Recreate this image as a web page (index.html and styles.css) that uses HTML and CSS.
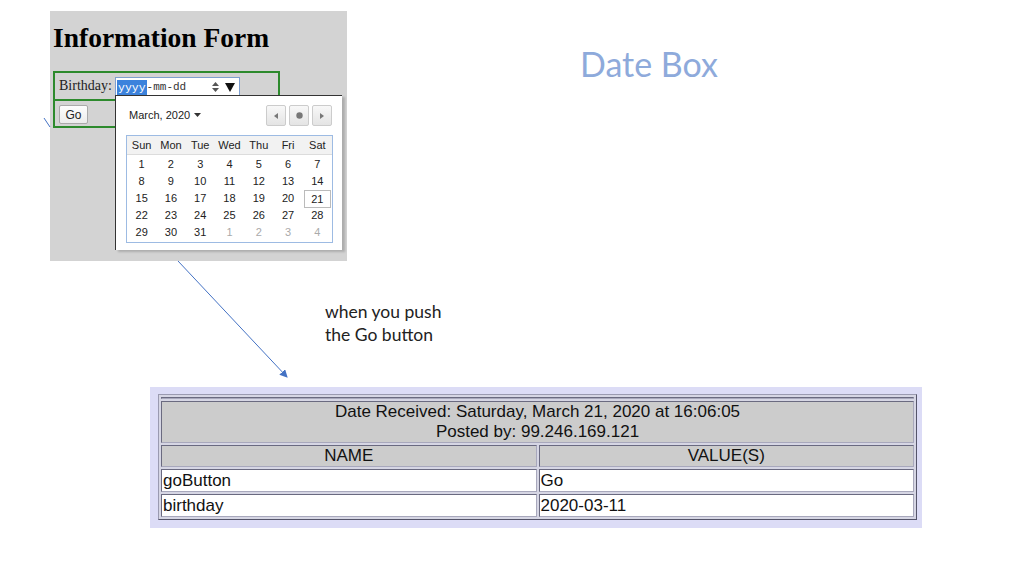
FILE: index.html
```html
<!DOCTYPE html>
<html>
<head>
<meta charset="utf-8">
<link rel="stylesheet" href="styles.css">
</head>
<body>
<div class="slide">
  <div class="shot-form">
    <h1 class="form-title">Information Form</h1>
    <div class="form-box">
      <div class="form-row row-birthday">
        <span class="label">Birthday:</span>
        <div class="date-input">
          <span class="seg-sel">yyyy</span><span class="seg">-mm-dd</span>
          <span class="spin">
            <svg width="9" height="12" viewBox="0 0 9 12"><path d="M4.5 1 L8 5 H1 Z M4.5 11 L8 7 H1 Z" fill="#555"/></svg>
          </span>
          <span class="drop">
            <svg width="10" height="9" viewBox="0 0 10 9"><path d="M0 0 H10 L5 9 Z" fill="#111"/></svg>
          </span>
        </div>
      </div>
      <div class="form-row row-go">
        <button class="go-btn">Go</button>
      </div>
    </div>

    <div class="picker">
      <div class="picker-head">
        <span class="month">March, 2020 <svg width="7" height="4" viewBox="0 0 7 4"><path d="M0 0 H7 L3.5 4 Z" fill="#333"/></svg></span>
        <div class="navs">
          <span class="nav"><svg width="4" height="6" viewBox="0 0 4 6"><path d="M4 0 V6 L0 3 Z" fill="#777"/></svg></span>
          <span class="nav"><svg width="7" height="7" viewBox="0 0 7 7"><circle cx="3.5" cy="3.5" r="3.2" fill="#777"/></svg></span>
          <span class="nav"><svg width="4" height="6" viewBox="0 0 4 6"><path d="M0 0 V6 L4 3 Z" fill="#777"/></svg></span>
        </div>
      </div>
      <div class="cal">
        <div class="cal-head">
          <span>Sun</span><span>Mon</span><span>Tue</span><span>Wed</span><span>Thu</span><span>Fri</span><span>Sat</span>
        </div>
        <div class="cal-body">
          <span>1</span><span>2</span><span>3</span><span>4</span><span>5</span><span>6</span><span>7</span>
          <span>8</span><span>9</span><span>10</span><span>11</span><span>12</span><span>13</span><span>14</span>
          <span>15</span><span>16</span><span>17</span><span>18</span><span>19</span><span>20</span><span class="today">21</span>
          <span>22</span><span>23</span><span>24</span><span>25</span><span>26</span><span>27</span><span>28</span>
          <span>29</span><span>30</span><span>31</span><span class="other">1</span><span class="other">2</span><span class="other">3</span><span class="other">4</span>
        </div>
      </div>
    </div>
  </div>

  <div class="title">Date Box</div>

  <div class="note">when you push<br>the Go button</div>

  <svg class="arrows" width="1024" height="576" viewBox="0 0 1024 576">
    <defs>
      <marker id="ah" markerWidth="8" markerHeight="8" refX="7" refY="4" orient="auto" markerUnits="userSpaceOnUse">
        <path d="M0 0 L8 4 L0 8 Z" fill="#4472c4"/>
      </marker>
    </defs>
    <line x1="44" y1="118" x2="50" y2="127" stroke="#4472c4" stroke-width="1"/>
    <line x1="178" y1="261" x2="287" y2="377" stroke="#4472c4" stroke-width="1" marker-end="url(#ah)"/>
  </svg>

  <div class="shot-result">
    <table class="result">
      <tr class="spacer"><td colspan="2"></td></tr>
      <tr><th colspan="2" class="head">Date Received: Saturday, March 21, 2020 at 16:06:05<br>Posted by: 99.246.169.121</th></tr>
      <tr><th class="col">NAME</th><th class="col">VALUE(S)</th></tr>
      <tr><td>goButton</td><td>Go</td></tr>
      <tr><td>birthday</td><td>2020-03-11</td></tr>
    </table>
  </div>
</div>
</body>
</html>
```

FILE: styles.css
```css
html, body {
  margin: 0;
  padding: 0;
  background: #fff;
}

.slide {
  position: relative;
  width: 1024px;
  height: 576px;
  overflow: hidden;
  background: #fff;
  font-family: Lato, "Open Sans", sans-serif;
}

/* ---------- form screenshot ---------- */
.shot-form {
  position: absolute;
  left: 50px;
  top: 11px;
  width: 297px;
  height: 250px;
  background: #d3d3d3;
  box-sizing: border-box;
  padding: 11px 0 0 3px;
}

.form-title {
  margin: 0;
  font-family: "Liberation Serif", serif;
  font-weight: bold;
  font-size: 27.5px;
  line-height: 32px;
  color: #000;
}

.form-box {
  margin-top: 17px;
  width: 227px;
  border: 2px solid #2d8a2d;
  box-sizing: border-box;
}

.form-row {
  display: flex;
  align-items: center;
  box-sizing: border-box;
}

.row-birthday {
  height: 28px;
  padding-left: 4px;
  border-bottom: 2px solid #2d8a2d;
}

.row-go {
  height: 25px;
  padding-left: 4px;
  padding-top: 2px;
}

.label {
  font-family: "Liberation Serif", serif;
  font-size: 14px;
  color: #222;
  width: 56px;
}

.date-input {
  position: relative;
  top: 1px;
  display: flex;
  align-items: center;
  width: 125px;
  height: 20px;
  box-sizing: border-box;
  border: 1px solid #7e9fd0;
  background: #fff;
  padding-left: 1px;
}

.seg-sel {
  background: #3b82dc;
  color: #fff;
  font-family: "Liberation Mono", monospace;
  font-size: 11.5px;
  line-height: 15px;
  padding: 0 1px;
}

.seg {
  font-family: "Liberation Mono", monospace;
  font-size: 11px;
  color: #333;
}

.spin {
  margin-left: auto;
  display: flex;
  align-items: center;
}

.drop {
  display: flex;
  align-items: center;
  margin-left: 5px;
  margin-right: 4px;
}

.go-btn {
  margin: 0;
  width: 29px;
  height: 19px;
  padding: 0;
  font-family: "Liberation Sans", Arial, sans-serif;
  font-size: 12px;
  color: #222;
  background: linear-gradient(#fdfdfd, #ececec);
  border: 1px solid #aaa;
  border-radius: 2px;
}

/* picker popup (overlay) */
.picker {
  position: absolute;
  left: 65px;
  top: 84px;
  width: 227px;
  height: 155px;
  box-sizing: border-box;
  background: #fff;
  border-left: 1px solid #333;
  border-top: 1px solid #333;
  box-shadow: 3px 2px 2px rgba(0,0,0,0.18);
  padding: 9px 10px 0 10px;
}

.picker-head {
  display: flex;
  align-items: center;
  justify-content: space-between;
  height: 21px;
  margin-bottom: 9px;
}

.month {
  font-family: "Liberation Sans", Arial, sans-serif;
  font-size: 11px;
  color: #222;
  padding-left: 3px;
  display: flex;
  align-items: center;
  gap: 4px;
  margin-top: -2px;
}

.navs {
  display: flex;
  gap: 3px;
}

.nav {
  width: 20px;
  height: 21px;
  box-sizing: border-box;
  display: flex;
  align-items: center;
  justify-content: center;
  border: 1px solid #ccc;
  border-radius: 2px;
  background: linear-gradient(#f8f8f8, #e4e4e4);
}

.cal {
  width: 207px;
  box-sizing: border-box;
  border: 1px solid #9dbbe3;
  font-family: "Liberation Sans", Arial, sans-serif;
  font-size: 11px;
  color: #222;
}

.cal-head,
.cal-body {
  display: grid;
  grid-template-columns: repeat(7, 1fr);
  text-align: center;
}

.cal-head {
  height: 18px;
  align-items: center;
  background: #f2f2f2;
  border-bottom: 1px solid #dcdcdc;
}

.cal-body {
  grid-auto-rows: 17px;
  align-items: center;
  padding: 1px 0 1px 0;
}

.cal-body span {
  line-height: 17px;
}

.cal-body .other {
  color: #aaa;
}

.cal-body .today {
  box-sizing: border-box;
  border: 1px solid #bbb;
  height: 18px;
  line-height: 16px;
  margin: 0 1px;
}

/* ---------- slide text ---------- */
.title {
  position: absolute;
  left: 580px;
  top: 43px;
  font-family: Lato, "Open Sans", sans-serif;
  font-weight: 400;
  font-size: 34px;
  color: #8eaadb;
}

.note {
  position: absolute;
  left: 325px;
  top: 300px;
  font-family: Lato, "Open Sans", sans-serif;
  font-size: 17.5px;
  line-height: 23px;
  color: #222;
}

.arrows {
  position: absolute;
  left: 0;
  top: 0;
  pointer-events: none;
}

/* ---------- result screenshot ---------- */
.shot-result {
  position: absolute;
  left: 150px;
  top: 387px;
  width: 772px;
  height: 141px;
  box-sizing: border-box;
  background: #dcdcf6;
  padding: 7px 0 0 8px;
}

.result {
  width: 759px;
  border-collapse: separate;
  border-spacing: 2px;
  border: 1px solid;
  border-color: #9a9ab0 #55556a #55556a #9a9ab0;
  background: #d6d6e4;
  font-family: "Liberation Sans", Arial, sans-serif;
  font-size: 17px;
  color: #111;
}

.result td,
.result th {
  border: 1px solid;
  border-color: #6a6a80 #a8a8bc #a8a8bc #6a6a80;
  padding: 0 1px;
  font-weight: normal;
}

.result .spacer td {
  height: 0;
  padding: 0;
  background: #d0d0d8;
}

.result th {
  background: #cccccc;
  text-align: center;
}

.result th.head {
  height: 40px;
  line-height: 20px;
}

.result th.col {
  height: 20px;
  line-height: 20px;
}

.result td {
  background: #fff;
  height: 21px;
  line-height: 21px;
  width: 50%;
}
```
